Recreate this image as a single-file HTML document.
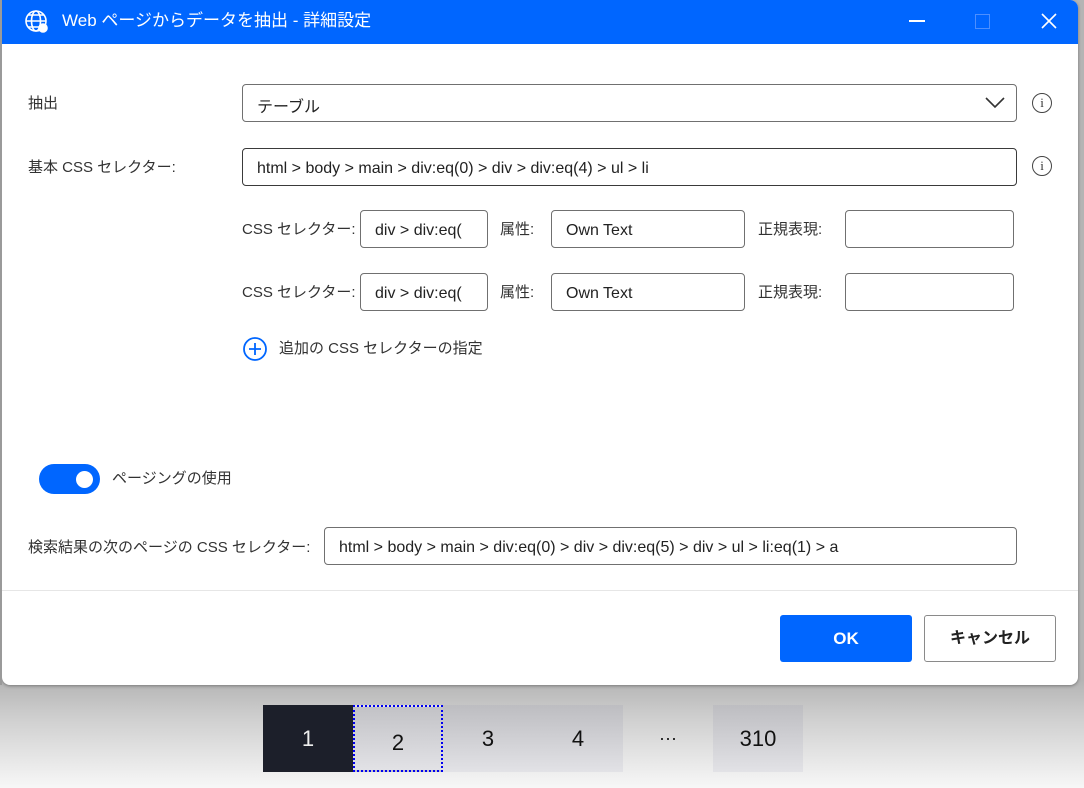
<!DOCTYPE html>
<html><head><meta charset="utf-8"><style>
*{box-sizing:border-box;margin:0;padding:0}
body{width:1084px;height:788px;overflow:hidden;position:relative;font-family:"Liberation Sans","Noto Sans CJK JP",sans-serif;font-size:15px;color:#323232;background:linear-gradient(#b4b4b4 0px,#b4b4b4 680px,#d0d0d0 720px,#f7f7f7 788px)}
.dlg{position:absolute;left:2px;top:0;width:1076px;height:685px;background:#fff;border-radius:0 8px 8px 8px;box-shadow:0 1px 3px rgba(0,0,0,.35);overflow:hidden}
.tb{position:absolute;left:0;top:0;width:100%;height:44px;background:#0066ff;color:#fff}
.a{position:absolute;white-space:nowrap;line-height:20px}
.in{position:absolute;border:1px solid #707070;border-radius:4px;height:38px;background:#fff;padding-left:14px;padding-top:3px;display:flex;align-items:center;white-space:nowrap;overflow:hidden;color:#222;font-size:16px}
.in.d{border-color:#3a3a3a}
.info{position:absolute;width:20px;height:20px;border:1.5px solid #444;border-radius:50%;font-size:13px;text-align:center;line-height:17px;color:#333;font-family:"Liberation Serif",serif}
.pg{position:absolute;top:705px;height:67px;line-height:67px;text-align:center;font-size:22px;color:#111;font-family:"Liberation Sans",sans-serif}
</style></head><body>
<div class="dlg">
 <div class="tb">
  <svg class="a" style="left:22px;top:9px" width="26" height="26" viewBox="0 0 26 26" fill="none" stroke="#fff" stroke-width="1.6"><circle cx="12" cy="12" r="10"/><ellipse cx="12" cy="12" rx="4.5" ry="10"/><path d="M2 12h20M4 6h16M4 18h16"/><circle cx="19" cy="19" r="4" fill="#fff"/></svg>
  <div class="a" style="left:60px;top:11px;font-size:17px">Web ページからデータを抽出 - 詳細設定</div>
  <div class="a" style="left:907px;top:20px;width:16px;height:1.5px;background:#fff"></div>
  <div class="a" style="left:973px;top:14px;width:15px;height:15px;border:1.5px solid #4d8fff"></div>
  <svg class="a" style="left:1038px;top:12px" width="18" height="18" viewBox="0 0 18 18" stroke="#fff" stroke-width="1.6"><path d="M2 2L16 16M16 2L2 16"/></svg>
 </div>
 <div class="a" style="left:26px;top:94px">抽出</div>
 <div class="in" style="left:240px;top:84px;width:775px">テーブル</div>
 <svg class="a" style="left:983px;top:97px" width="20" height="12" viewBox="0 0 20 12" fill="none" stroke="#333" stroke-width="1.6"><path d="M1 1l9 9 9-9"/></svg>
 <div class="info" style="left:1030px;top:93px">i</div>
 <div class="a" style="left:26px;top:158px">基本 CSS セレクター:</div>
 <div class="in d" style="left:240px;top:148px;width:775px">html &gt; body &gt; main &gt; div:eq(0) &gt; div &gt; div:eq(4) &gt; ul &gt; li</div>
 <div class="info" style="left:1030px;top:156px">i</div>

 <div class="a" style="left:240px;top:220px">CSS セレクター:</div>
 <div class="in" style="left:358px;top:210px;width:128px">div &gt; div:eq(</div>
 <div class="a" style="left:498px;top:220px">属性:</div>
 <div class="in" style="left:549px;top:210px;width:194px">Own Text</div>
 <div class="a" style="left:756px;top:220px">正規表現:</div>
 <div class="in" style="left:843px;top:210px;width:169px"></div>

 <div class="a" style="left:240px;top:283px">CSS セレクター:</div>
 <div class="in" style="left:358px;top:273px;width:128px">div &gt; div:eq(</div>
 <div class="a" style="left:498px;top:283px">属性:</div>
 <div class="in" style="left:549px;top:273px;width:194px">Own Text</div>
 <div class="a" style="left:756px;top:283px">正規表現:</div>
 <div class="in" style="left:843px;top:273px;width:169px"></div>

 <svg class="a" style="left:240px;top:336px" width="26" height="26" viewBox="0 0 26 26" fill="none" stroke="#0066ff" stroke-width="1.8"><circle cx="13" cy="13" r="11"/><path d="M13 7v12M7 13h12"/></svg>
 <div class="a" style="left:277px;top:339px">追加の CSS セレクターの指定</div>

 <div class="a" style="left:37px;top:464px;width:61px;height:30px;border-radius:15px;background:#0066ff"></div>
 <div class="a" style="left:74px;top:471px;width:17px;height:17px;border-radius:50%;background:#fff"></div>
 <div class="a" style="left:110px;top:469px">ページングの使用</div>

 <div class="a" style="left:26px;top:538px">検索結果の次のページの CSS セレクター:</div>
 <div class="in" style="left:322px;top:527px;width:693px">html &gt; body &gt; main &gt; div:eq(0) &gt; div &gt; div:eq(5) &gt; div &gt; ul &gt; li:eq(1) &gt; a</div>

 <div class="a" style="left:0;top:590px;width:100%;height:1px;background:#e6e6e6"></div>
 <div class="a" style="left:778px;top:615px;width:132px;height:47px;background:#0066ff;border-radius:3px;color:#fff;font-weight:bold;text-align:center;line-height:47px;font-size:17px">OK</div>
 <div class="a" style="left:922px;top:615px;width:132px;height:47px;border:1px solid #8a8a8a;border-radius:3px;color:#222;font-weight:bold;text-align:center;line-height:45px;font-size:16px">キャンセル</div>
</div>
<div class="a" style="left:0;top:0;width:2px;height:685px;background:#9a9a9a"></div>
<div class="pg" style="left:263px;width:90px;background:#1c1f2a;color:#eee">1</div>
<div class="pg" style="left:353px;width:90px;background:linear-gradient(#c2c2c6,#e2e2e6);border:2px dotted #0000ee;line-height:63px;padding-top:4px">2</div>
<div class="pg" style="left:443px;width:180px;background:linear-gradient(#bdbdc1,#e2e2e6)"><span style="display:inline-block;width:90px">3</span><span style="display:inline-block;width:90px">4</span></div>
<div class="pg" style="left:623px;width:90px;font-size:18px">···</div>
<div class="pg" style="left:713px;width:90px;background:linear-gradient(#bdbdc1,#e2e2e6)">310</div>
</body></html>
